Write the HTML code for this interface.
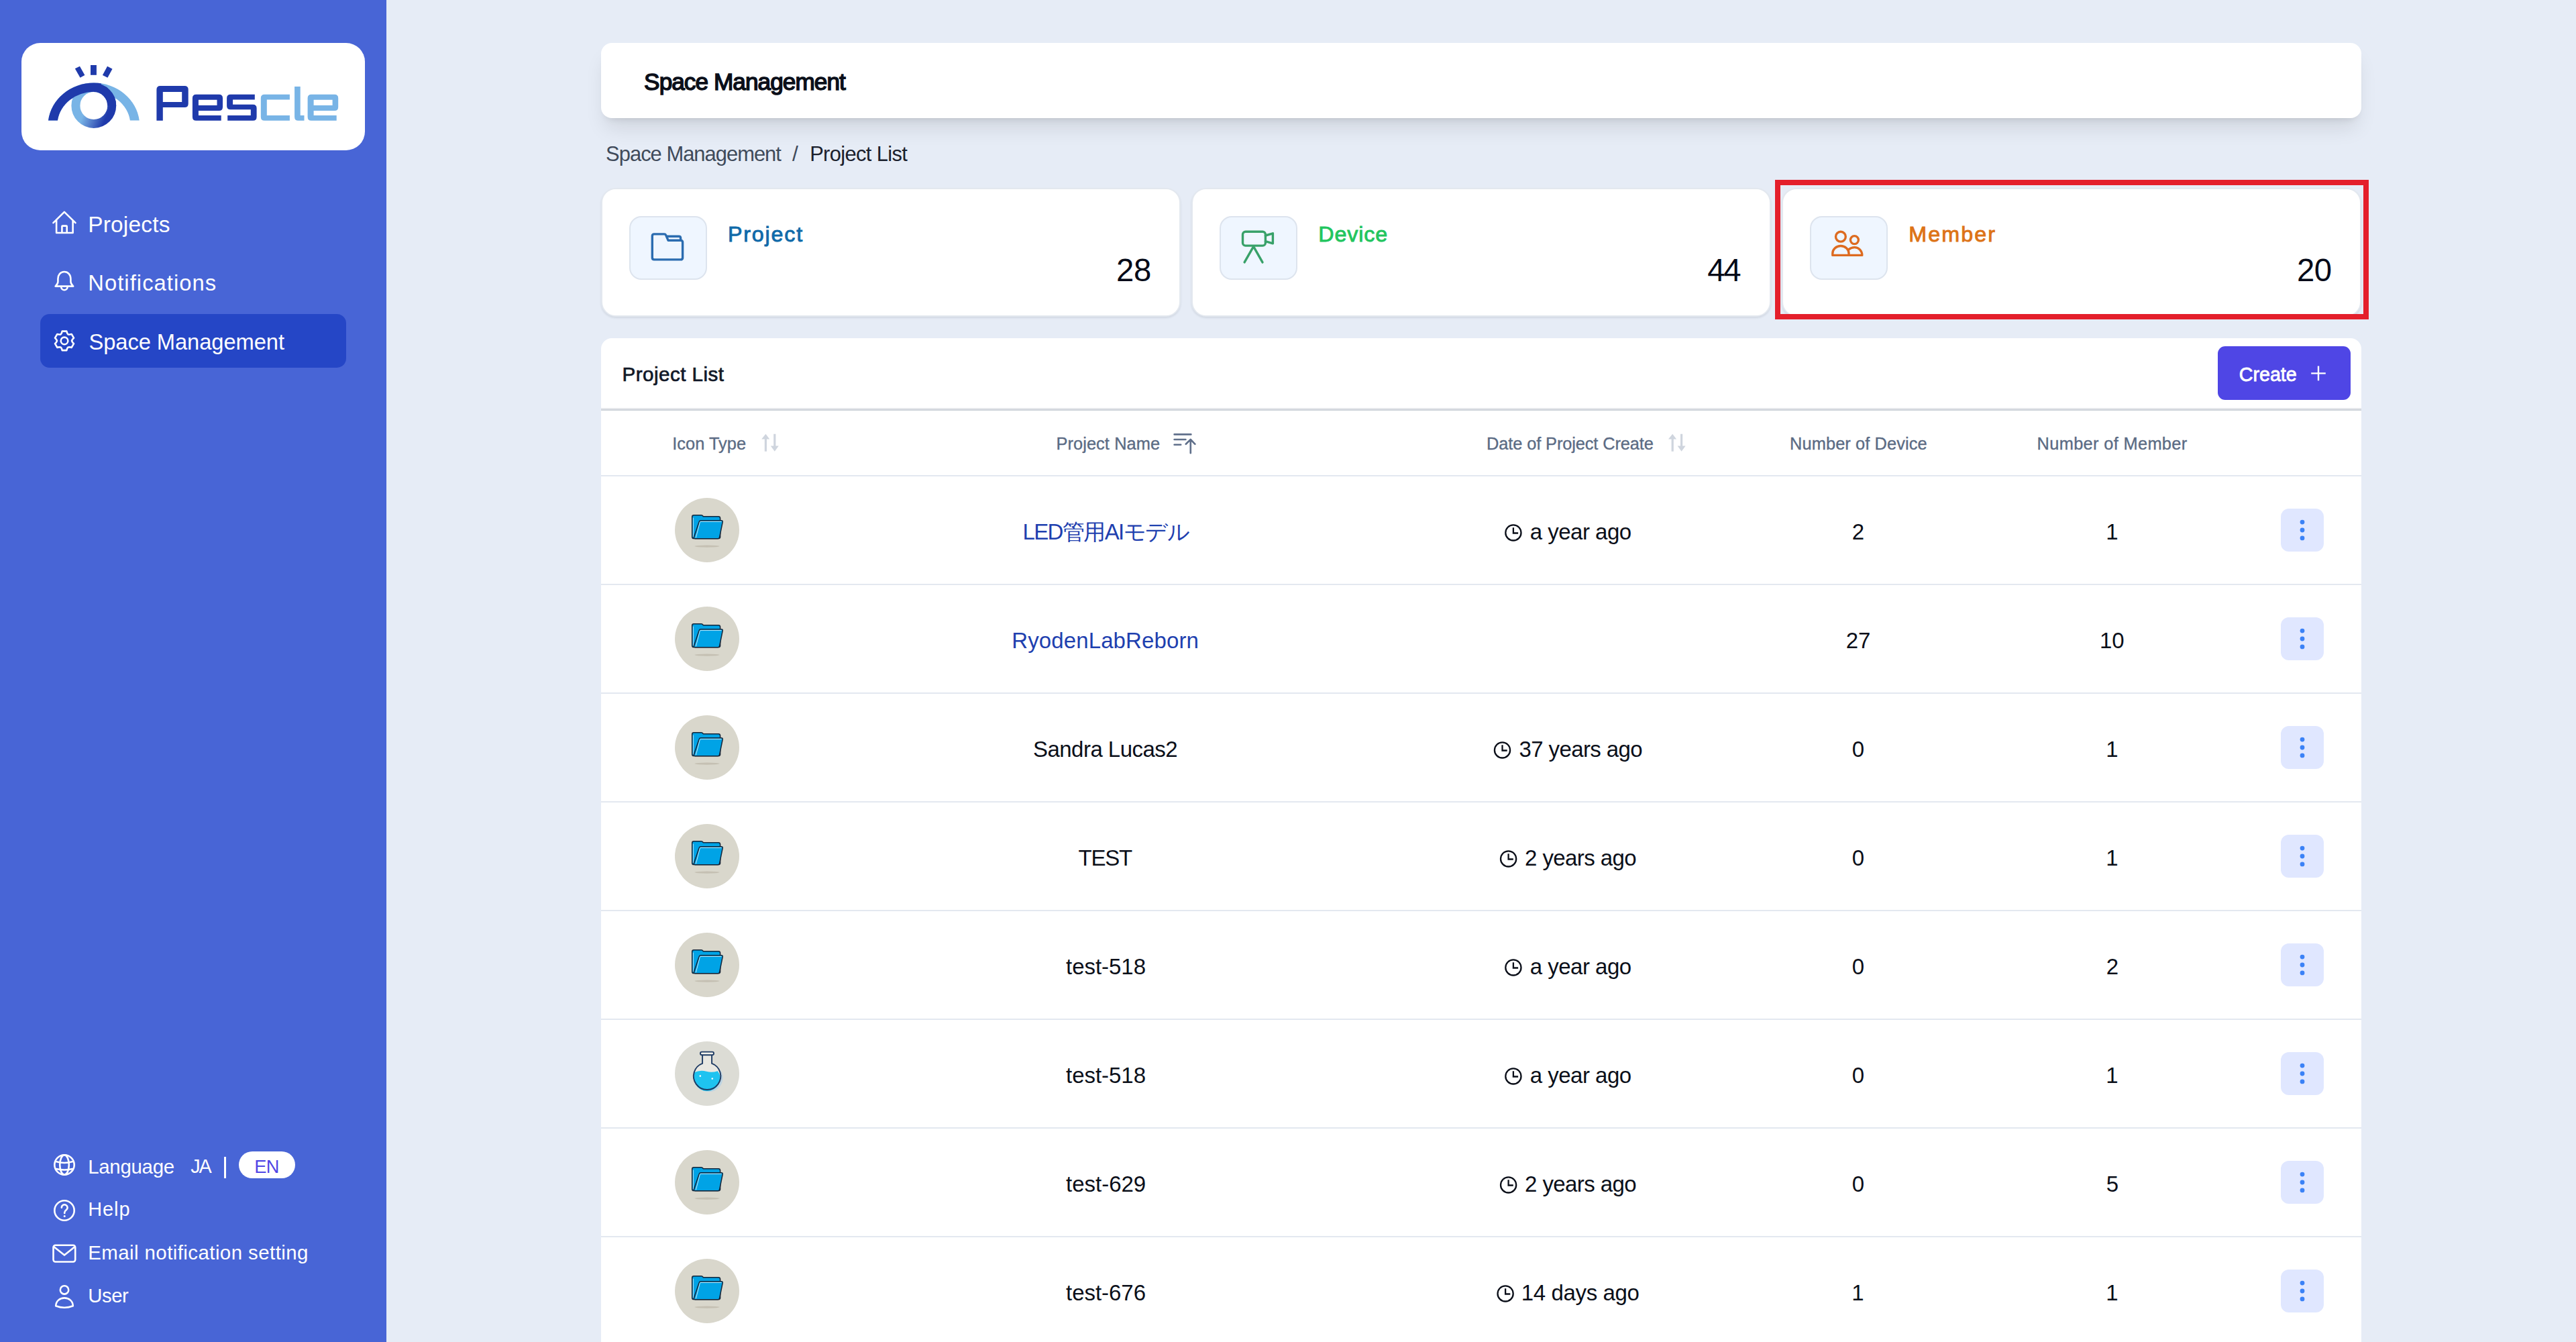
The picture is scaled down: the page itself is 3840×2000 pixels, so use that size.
<!DOCTYPE html>
<html><head><meta charset="utf-8"><style>
html,body{margin:0;padding:0}
body{width:3840px;height:2000px;overflow:hidden;position:relative;background:#e6ecf6;font-family:'Liberation Sans',sans-serif;}
</style></head><body>
<div style="position:absolute;left:0.00px;top:0.00px;width:576.00px;height:2000.00px;background:#4865d6"></div>
<div style="position:absolute;left:32.00px;top:64.00px;width:512.00px;height:160.00px;background:#fff;border-radius:28px"></div>
<div style="position:absolute;left:60.00px;top:468.00px;width:456.00px;height:80.00px;background:#2546c6;border-radius:14px"></div>
<div style="position:absolute;left:131.23px;top:317.61px;font-size:33.41px;line-height:33.41px;letter-spacing:0.217px;color:#ffffff;white-space:nowrap">Projects</div>
<div style="position:absolute;left:131.28px;top:405.51px;font-size:32.71px;line-height:32.71px;letter-spacing:1.063px;color:#ffffff;white-space:nowrap">Notifications</div>
<div style="position:absolute;left:132.43px;top:494.01px;font-size:32.71px;line-height:32.71px;letter-spacing:-0.074px;color:#ffffff;white-space:nowrap">Space Management</div>
<div style="position:absolute;left:131.15px;top:1723.59px;font-size:29.42px;line-height:29.42px;letter-spacing:-0.269px;color:#ffffff;white-space:nowrap">Language</div>
<div style="position:absolute;left:284.17px;top:1724.13px;font-size:28.78px;line-height:28.78px;letter-spacing:-2.096px;color:#ffffff;white-space:nowrap">JA</div>
<div style="position:absolute;left:333.90px;top:1724.00px;width:3.00px;height:32.00px;background:#fff"></div>
<div style="position:absolute;left:355.80px;top:1716.00px;width:84.40px;height:40.00px;background:#fff;border-radius:20px"></div>
<div style="position:absolute;left:379.13px;top:1725.49px;font-size:27.18px;line-height:27.18px;letter-spacing:-0.396px;color:#4f46e5;white-space:nowrap">EN</div>
<div style="position:absolute;left:131.19px;top:1787.94px;font-size:28.88px;line-height:28.88px;letter-spacing:1.003px;color:#ffffff;white-space:nowrap">Help</div>
<div style="position:absolute;left:131.15px;top:1851.79px;font-size:29.42px;line-height:29.42px;letter-spacing:0.447px;color:#ffffff;white-space:nowrap">Email notification setting</div>
<div style="position:absolute;left:131.30px;top:1915.80px;font-size:29.28px;line-height:29.28px;letter-spacing:-0.434px;color:#ffffff;white-space:nowrap">User</div>
<div style="position:absolute;left:896.00px;top:64.00px;width:2624.00px;height:112.00px;background:#fff;border-radius:16px;box-shadow:0 20px 30px -6px rgba(0,0,0,0.10),0 8px 12px -8px rgba(0,0,0,0.12)"></div>
<div style="position:absolute;left:960.12px;top:104.42px;font-size:35.17px;line-height:35.17px;letter-spacing:-0.931px;color:#0b0f19;-webkit-text-stroke:1.5px #0b0f19;white-space:nowrap">Space Management</div>
<div style="position:absolute;left:903.11px;top:214.56px;font-size:30.88px;line-height:30.88px;letter-spacing:-0.973px;color:#3f4a5a;white-space:nowrap">Space Management</div>
<div style="position:absolute;left:1181.00px;top:213.75px;font-size:31.83px;line-height:31.83px;letter-spacing:0.000px;color:#3f4a5a;white-space:nowrap">/</div>
<div style="position:absolute;left:1207.13px;top:214.56px;font-size:30.88px;line-height:30.88px;letter-spacing:-0.633px;color:#1a202c;white-space:nowrap">Project List</div>
<div style="position:absolute;left:896.00px;top:280.00px;width:864.00px;height:192.00px;background:#fff;border-radius:22px;border:2px solid #e3e8ef;box-sizing:border-box;box-shadow:0 2px 3px rgba(30,40,60,0.10)"></div>
<div style="position:absolute;left:938.00px;top:322.00px;width:116.00px;height:95.00px;background:#eff6ff;border:2px solid #dde4ee;border-radius:18px;box-sizing:border-box"></div>
<div style="position:absolute;left:1776.00px;top:280.00px;width:864.00px;height:192.00px;background:#fff;border-radius:22px;border:2px solid #e3e8ef;box-sizing:border-box;box-shadow:0 2px 3px rgba(30,40,60,0.10)"></div>
<div style="position:absolute;left:1818.00px;top:322.00px;width:116.00px;height:95.00px;background:#eff6ff;border:2px solid #dde4ee;border-radius:18px;box-sizing:border-box"></div>
<div style="position:absolute;left:2656.00px;top:280.00px;width:864.00px;height:192.00px;background:#fff;border-radius:22px;border:2px solid #e3e8ef;box-sizing:border-box;box-shadow:0 2px 3px rgba(30,40,60,0.10)"></div>
<div style="position:absolute;left:2698.00px;top:322.00px;width:116.00px;height:95.00px;background:#eff6ff;border:2px solid #dde4ee;border-radius:18px;box-sizing:border-box"></div>
<div style="position:absolute;left:1084.90px;top:332.50px;font-size:32.24px;line-height:32.24px;letter-spacing:1.832px;color:#0f6aa9;-webkit-text-stroke:0.9px #0f6aa9;white-space:nowrap">Project</div>
<div style="position:absolute;left:1663.93px;top:379.34px;font-size:47.31px;line-height:47.31px;letter-spacing:-0.257px;color:#050a18;white-space:nowrap">28</div>
<div style="position:absolute;left:1965.30px;top:332.50px;font-size:32.24px;line-height:32.24px;letter-spacing:0.879px;color:#22c55e;-webkit-text-stroke:0.9px #22c55e;white-space:nowrap">Device</div>
<div style="position:absolute;left:2545.35px;top:379.34px;font-size:47.31px;line-height:47.31px;letter-spacing:-2.386px;color:#050a18;white-space:nowrap">44</div>
<div style="position:absolute;left:2845.30px;top:332.50px;font-size:32.24px;line-height:32.24px;letter-spacing:2.072px;color:#dd7316;-webkit-text-stroke:0.9px #dd7316;white-space:nowrap">Member</div>
<div style="position:absolute;left:3423.93px;top:379.34px;font-size:47.31px;line-height:47.31px;letter-spacing:-0.494px;color:#050a18;white-space:nowrap">20</div>
<div style="position:absolute;left:2645.50px;top:267.50px;width:885.70px;height:208.00px;border:8px solid #e41f2b;box-sizing:border-box"></div>
<div style="position:absolute;left:896.00px;top:504.00px;width:2624.00px;height:1600.00px;background:#fff;border-radius:16px"></div>
<div style="position:absolute;left:896.00px;top:608.00px;width:2624.00px;height:2.00px;background:#e5e7eb"></div>
<div style="position:absolute;left:896.00px;top:610.00px;width:2624.00px;height:2.00px;background:#cdd2d9"></div>
<div style="position:absolute;left:927.43px;top:543.03px;font-size:29.61px;line-height:29.61px;letter-spacing:0.474px;color:#111827;-webkit-text-stroke:0.7px #111827;white-space:nowrap">Project List</div>
<div style="position:absolute;left:3306.00px;top:516.00px;width:198.00px;height:80.00px;background:#4f46e5;border-radius:11px"></div>
<div style="position:absolute;left:3337.70px;top:543.61px;font-size:28.69px;line-height:28.69px;letter-spacing:-0.011px;color:#fff;-webkit-text-stroke:0.8px #fff;white-space:nowrap">Create</div>
<div style="position:absolute;left:1002.24px;top:648.51px;font-size:25.38px;line-height:25.38px;letter-spacing:0.030px;color:#5b6b84;-webkit-text-stroke:0.35px #5b6b84;white-space:nowrap">Icon Type</div>
<div style="position:absolute;left:1574.40px;top:648.51px;font-size:25.38px;line-height:25.38px;letter-spacing:0.093px;color:#5b6b84;-webkit-text-stroke:0.35px #5b6b84;white-space:nowrap">Project Name</div>
<div style="position:absolute;left:2216.10px;top:648.51px;font-size:25.38px;line-height:25.38px;letter-spacing:-0.111px;color:#5b6b84;-webkit-text-stroke:0.35px #5b6b84;white-space:nowrap">Date of Project Create</div>
<div style="position:absolute;left:2668.10px;top:648.51px;font-size:25.38px;line-height:25.38px;letter-spacing:0.091px;color:#5b6b84;-webkit-text-stroke:0.35px #5b6b84;white-space:nowrap">Number of Device</div>
<div style="position:absolute;left:3036.60px;top:648.51px;font-size:25.38px;line-height:25.38px;letter-spacing:0.335px;color:#5b6b84;-webkit-text-stroke:0.35px #5b6b84;white-space:nowrap">Number of Member</div>
<div style="position:absolute;left:896.00px;top:708.00px;width:2624.00px;height:2.00px;background:#e3e8f0"></div>
<div style="position:absolute;left:896.00px;top:870.00px;width:2624.00px;height:2.00px;background:#e3e8f0"></div>
<div style="position:absolute;left:896.00px;top:1032.00px;width:2624.00px;height:2.00px;background:#e3e8f0"></div>
<div style="position:absolute;left:896.00px;top:1194.00px;width:2624.00px;height:2.00px;background:#e3e8f0"></div>
<div style="position:absolute;left:896.00px;top:1356.00px;width:2624.00px;height:2.00px;background:#e3e8f0"></div>
<div style="position:absolute;left:896.00px;top:1518.00px;width:2624.00px;height:2.00px;background:#e3e8f0"></div>
<div style="position:absolute;left:896.00px;top:1680.00px;width:2624.00px;height:2.00px;background:#e3e8f0"></div>
<div style="position:absolute;left:896.00px;top:1842.00px;width:2624.00px;height:2.00px;background:#e3e8f0"></div>
<div style="position:absolute;left:1006.00px;top:742.00px;width:96.00px;height:96.00px;background:#d9d7cc;border-radius:50%"></div>
<div style="position:absolute;left:3400.00px;top:758.00px;width:64.00px;height:64.00px;background:#e0e7ff;border-radius:12px"></div>
<div style="position:absolute;left:1524.38px;top:776.46px;font-size:33.00px;line-height:33.00px;letter-spacing:-1.580px;color:#1e40af;white-space:nowrap">LED管用AIモデル</div>
<div style="position:absolute;left:2280.73px;top:776.46px;font-size:33.00px;line-height:33.00px;letter-spacing:-0.498px;color:#0b0f19;white-space:nowrap">a year ago</div>
<div style="position:absolute;left:2760.84px;top:776.46px;font-size:33.00px;line-height:33.00px;letter-spacing:0.000px;color:#0b0f19;white-space:nowrap">2</div>
<div style="position:absolute;left:3139.35px;top:776.46px;font-size:33.00px;line-height:33.00px;letter-spacing:0.000px;color:#0b0f19;white-space:nowrap">1</div>
<div style="position:absolute;left:1006.00px;top:904.00px;width:96.00px;height:96.00px;background:#d9d7cc;border-radius:50%"></div>
<div style="position:absolute;left:3400.00px;top:920.00px;width:64.00px;height:64.00px;background:#e0e7ff;border-radius:12px"></div>
<div style="position:absolute;left:1508.26px;top:938.46px;font-size:33.00px;line-height:33.00px;letter-spacing:0.113px;color:#1e40af;white-space:nowrap">RyodenLabReborn</div>
<div style="position:absolute;left:2751.68px;top:938.46px;font-size:33.00px;line-height:33.00px;letter-spacing:0.000px;color:#0b0f19;white-space:nowrap">27</div>
<div style="position:absolute;left:3130.03px;top:938.46px;font-size:33.00px;line-height:33.00px;letter-spacing:0.000px;color:#0b0f19;white-space:nowrap">10</div>
<div style="position:absolute;left:1006.00px;top:1066.00px;width:96.00px;height:96.00px;background:#d9d7cc;border-radius:50%"></div>
<div style="position:absolute;left:3400.00px;top:1082.00px;width:64.00px;height:64.00px;background:#e0e7ff;border-radius:12px"></div>
<div style="position:absolute;left:1539.92px;top:1100.46px;font-size:33.00px;line-height:33.00px;letter-spacing:-0.516px;color:#0b0f19;white-space:nowrap">Sandra Lucas2</div>
<div style="position:absolute;left:2264.49px;top:1100.46px;font-size:33.00px;line-height:33.00px;letter-spacing:-0.606px;color:#0b0f19;white-space:nowrap">37 years ago</div>
<div style="position:absolute;left:2760.76px;top:1100.46px;font-size:33.00px;line-height:33.00px;letter-spacing:0.000px;color:#0b0f19;white-space:nowrap">0</div>
<div style="position:absolute;left:3139.35px;top:1100.46px;font-size:33.00px;line-height:33.00px;letter-spacing:0.000px;color:#0b0f19;white-space:nowrap">1</div>
<div style="position:absolute;left:1006.00px;top:1228.00px;width:96.00px;height:96.00px;background:#d9d7cc;border-radius:50%"></div>
<div style="position:absolute;left:3400.00px;top:1244.00px;width:64.00px;height:64.00px;background:#e0e7ff;border-radius:12px"></div>
<div style="position:absolute;left:1607.49px;top:1262.46px;font-size:33.00px;line-height:33.00px;letter-spacing:-1.200px;color:#0b0f19;white-space:nowrap">TEST</div>
<div style="position:absolute;left:2273.10px;top:1262.46px;font-size:33.00px;line-height:33.00px;letter-spacing:-0.605px;color:#0b0f19;white-space:nowrap">2 years ago</div>
<div style="position:absolute;left:2760.76px;top:1262.46px;font-size:33.00px;line-height:33.00px;letter-spacing:0.000px;color:#0b0f19;white-space:nowrap">0</div>
<div style="position:absolute;left:3139.35px;top:1262.46px;font-size:33.00px;line-height:33.00px;letter-spacing:0.000px;color:#0b0f19;white-space:nowrap">1</div>
<div style="position:absolute;left:1006.00px;top:1390.00px;width:96.00px;height:96.00px;background:#d9d7cc;border-radius:50%"></div>
<div style="position:absolute;left:3400.00px;top:1406.00px;width:64.00px;height:64.00px;background:#e0e7ff;border-radius:12px"></div>
<div style="position:absolute;left:1589.11px;top:1424.46px;font-size:33.00px;line-height:33.00px;letter-spacing:-0.045px;color:#0b0f19;white-space:nowrap">test-518</div>
<div style="position:absolute;left:2280.73px;top:1424.46px;font-size:33.00px;line-height:33.00px;letter-spacing:-0.498px;color:#0b0f19;white-space:nowrap">a year ago</div>
<div style="position:absolute;left:2760.76px;top:1424.46px;font-size:33.00px;line-height:33.00px;letter-spacing:0.000px;color:#0b0f19;white-space:nowrap">0</div>
<div style="position:absolute;left:3139.84px;top:1424.46px;font-size:33.00px;line-height:33.00px;letter-spacing:0.000px;color:#0b0f19;white-space:nowrap">2</div>
<div style="position:absolute;left:1006.00px;top:1552.00px;width:96.00px;height:96.00px;background:#dcdcd5;border-radius:50%"></div>
<div style="position:absolute;left:3400.00px;top:1568.00px;width:64.00px;height:64.00px;background:#e0e7ff;border-radius:12px"></div>
<div style="position:absolute;left:1589.11px;top:1586.46px;font-size:33.00px;line-height:33.00px;letter-spacing:-0.045px;color:#0b0f19;white-space:nowrap">test-518</div>
<div style="position:absolute;left:2280.73px;top:1586.46px;font-size:33.00px;line-height:33.00px;letter-spacing:-0.498px;color:#0b0f19;white-space:nowrap">a year ago</div>
<div style="position:absolute;left:2760.76px;top:1586.46px;font-size:33.00px;line-height:33.00px;letter-spacing:0.000px;color:#0b0f19;white-space:nowrap">0</div>
<div style="position:absolute;left:3139.35px;top:1586.46px;font-size:33.00px;line-height:33.00px;letter-spacing:0.000px;color:#0b0f19;white-space:nowrap">1</div>
<div style="position:absolute;left:1006.00px;top:1714.00px;width:96.00px;height:96.00px;background:#d9d7cc;border-radius:50%"></div>
<div style="position:absolute;left:3400.00px;top:1730.00px;width:64.00px;height:64.00px;background:#e0e7ff;border-radius:12px"></div>
<div style="position:absolute;left:1589.11px;top:1748.46px;font-size:33.00px;line-height:33.00px;letter-spacing:-0.021px;color:#0b0f19;white-space:nowrap">test-629</div>
<div style="position:absolute;left:2273.10px;top:1748.46px;font-size:33.00px;line-height:33.00px;letter-spacing:-0.605px;color:#0b0f19;white-space:nowrap">2 years ago</div>
<div style="position:absolute;left:2760.76px;top:1748.46px;font-size:33.00px;line-height:33.00px;letter-spacing:0.000px;color:#0b0f19;white-space:nowrap">0</div>
<div style="position:absolute;left:3139.84px;top:1748.46px;font-size:33.00px;line-height:33.00px;letter-spacing:0.000px;color:#0b0f19;white-space:nowrap">5</div>
<div style="position:absolute;left:1006.00px;top:1876.00px;width:96.00px;height:96.00px;background:#d9d7cc;border-radius:50%"></div>
<div style="position:absolute;left:3400.00px;top:1892.00px;width:64.00px;height:64.00px;background:#e0e7ff;border-radius:12px"></div>
<div style="position:absolute;left:1589.11px;top:1910.46px;font-size:33.00px;line-height:33.00px;letter-spacing:-0.045px;color:#0b0f19;white-space:nowrap">test-676</div>
<div style="position:absolute;left:2267.78px;top:1910.46px;font-size:33.00px;line-height:33.00px;letter-spacing:-0.365px;color:#0b0f19;white-space:nowrap">14 days ago</div>
<div style="position:absolute;left:2760.35px;top:1910.46px;font-size:33.00px;line-height:33.00px;letter-spacing:0.000px;color:#0b0f19;white-space:nowrap">1</div>
<div style="position:absolute;left:3139.35px;top:1910.46px;font-size:33.00px;line-height:33.00px;letter-spacing:0.000px;color:#0b0f19;white-space:nowrap">1</div>
<svg width="3840" height="2000" style="position:absolute;left:0;top:0"><circle cx="2255.90" cy="793.90" r="11.6" fill="none" stroke="#0b0f19" stroke-width="2.3"/>
<path d="M2255.90,786.30 V794.50 H2263.10" fill="none" stroke="#0b0f19" stroke-width="2.3"/>
<circle cx="3432" cy="778.10" r="3.4" fill="#3b82f6"/>
<circle cx="3432" cy="790.00" r="3.4" fill="#3b82f6"/>
<circle cx="3432" cy="801.90" r="3.4" fill="#3b82f6"/>
<g transform="translate(1054,790.0)"><ellipse cx="0" cy="24.1" rx="18.6" ry="1.6" fill="#bcb6a8" opacity="0.7"/><path d="M-22.3,-19.8 Q-22.3,-22.3 -19.8,-22.3 H-8.5 Q-7,-22.3 -6.2,-21 L-5.6,-20.2 H17 Q19.6,-20.2 19.6,-17.6 V10 Q19.6,12.6 17,12.6 H-19.8 Q-22.3,12.6 -22.3,10 Z" fill="#00a3e6" stroke="#15263a" stroke-width="1.5"/><path d="M-20.6,-18.5 V10.5" stroke="#ffffff" stroke-width="0.9" opacity="0.8"/><path d="M-11.8,-12.4 Q-11.2,-14.3 -9.2,-14.3 H21.3 Q23.6,-14.3 23.2,-12 L18.6,10.6 Q18.1,12.7 16,12.7 H-17.6 Q-20.1,12.7 -19.6,10.4 Z" fill="#00a3e6" stroke="#15263a" stroke-width="1.5"/><path d="M-10.4,-12.6 H21.5 M-10.6,-12 L-16.6,11.3" stroke="#ffffff" stroke-width="0.9" opacity="0.85" fill="none"/></g>
<circle cx="3432" cy="940.10" r="3.4" fill="#3b82f6"/>
<circle cx="3432" cy="952.00" r="3.4" fill="#3b82f6"/>
<circle cx="3432" cy="963.90" r="3.4" fill="#3b82f6"/>
<g transform="translate(1054,952.0)"><ellipse cx="0" cy="24.1" rx="18.6" ry="1.6" fill="#bcb6a8" opacity="0.7"/><path d="M-22.3,-19.8 Q-22.3,-22.3 -19.8,-22.3 H-8.5 Q-7,-22.3 -6.2,-21 L-5.6,-20.2 H17 Q19.6,-20.2 19.6,-17.6 V10 Q19.6,12.6 17,12.6 H-19.8 Q-22.3,12.6 -22.3,10 Z" fill="#00a3e6" stroke="#15263a" stroke-width="1.5"/><path d="M-20.6,-18.5 V10.5" stroke="#ffffff" stroke-width="0.9" opacity="0.8"/><path d="M-11.8,-12.4 Q-11.2,-14.3 -9.2,-14.3 H21.3 Q23.6,-14.3 23.2,-12 L18.6,10.6 Q18.1,12.7 16,12.7 H-17.6 Q-20.1,12.7 -19.6,10.4 Z" fill="#00a3e6" stroke="#15263a" stroke-width="1.5"/><path d="M-10.4,-12.6 H21.5 M-10.6,-12 L-16.6,11.3" stroke="#ffffff" stroke-width="0.9" opacity="0.85" fill="none"/></g>
<circle cx="2239.50" cy="1117.90" r="11.6" fill="none" stroke="#0b0f19" stroke-width="2.3"/>
<path d="M2239.50,1110.30 V1118.50 H2246.70" fill="none" stroke="#0b0f19" stroke-width="2.3"/>
<circle cx="3432" cy="1102.10" r="3.4" fill="#3b82f6"/>
<circle cx="3432" cy="1114.00" r="3.4" fill="#3b82f6"/>
<circle cx="3432" cy="1125.90" r="3.4" fill="#3b82f6"/>
<g transform="translate(1054,1114.0)"><ellipse cx="0" cy="24.1" rx="18.6" ry="1.6" fill="#bcb6a8" opacity="0.7"/><path d="M-22.3,-19.8 Q-22.3,-22.3 -19.8,-22.3 H-8.5 Q-7,-22.3 -6.2,-21 L-5.6,-20.2 H17 Q19.6,-20.2 19.6,-17.6 V10 Q19.6,12.6 17,12.6 H-19.8 Q-22.3,12.6 -22.3,10 Z" fill="#00a3e6" stroke="#15263a" stroke-width="1.5"/><path d="M-20.6,-18.5 V10.5" stroke="#ffffff" stroke-width="0.9" opacity="0.8"/><path d="M-11.8,-12.4 Q-11.2,-14.3 -9.2,-14.3 H21.3 Q23.6,-14.3 23.2,-12 L18.6,10.6 Q18.1,12.7 16,12.7 H-17.6 Q-20.1,12.7 -19.6,10.4 Z" fill="#00a3e6" stroke="#15263a" stroke-width="1.5"/><path d="M-10.4,-12.6 H21.5 M-10.6,-12 L-16.6,11.3" stroke="#ffffff" stroke-width="0.9" opacity="0.85" fill="none"/></g>
<circle cx="2248.60" cy="1279.90" r="11.6" fill="none" stroke="#0b0f19" stroke-width="2.3"/>
<path d="M2248.60,1272.30 V1280.50 H2255.80" fill="none" stroke="#0b0f19" stroke-width="2.3"/>
<circle cx="3432" cy="1264.10" r="3.4" fill="#3b82f6"/>
<circle cx="3432" cy="1276.00" r="3.4" fill="#3b82f6"/>
<circle cx="3432" cy="1287.90" r="3.4" fill="#3b82f6"/>
<g transform="translate(1054,1276.0)"><ellipse cx="0" cy="24.1" rx="18.6" ry="1.6" fill="#bcb6a8" opacity="0.7"/><path d="M-22.3,-19.8 Q-22.3,-22.3 -19.8,-22.3 H-8.5 Q-7,-22.3 -6.2,-21 L-5.6,-20.2 H17 Q19.6,-20.2 19.6,-17.6 V10 Q19.6,12.6 17,12.6 H-19.8 Q-22.3,12.6 -22.3,10 Z" fill="#00a3e6" stroke="#15263a" stroke-width="1.5"/><path d="M-20.6,-18.5 V10.5" stroke="#ffffff" stroke-width="0.9" opacity="0.8"/><path d="M-11.8,-12.4 Q-11.2,-14.3 -9.2,-14.3 H21.3 Q23.6,-14.3 23.2,-12 L18.6,10.6 Q18.1,12.7 16,12.7 H-17.6 Q-20.1,12.7 -19.6,10.4 Z" fill="#00a3e6" stroke="#15263a" stroke-width="1.5"/><path d="M-10.4,-12.6 H21.5 M-10.6,-12 L-16.6,11.3" stroke="#ffffff" stroke-width="0.9" opacity="0.85" fill="none"/></g>
<circle cx="2255.90" cy="1441.90" r="11.6" fill="none" stroke="#0b0f19" stroke-width="2.3"/>
<path d="M2255.90,1434.30 V1442.50 H2263.10" fill="none" stroke="#0b0f19" stroke-width="2.3"/>
<circle cx="3432" cy="1426.10" r="3.4" fill="#3b82f6"/>
<circle cx="3432" cy="1438.00" r="3.4" fill="#3b82f6"/>
<circle cx="3432" cy="1449.90" r="3.4" fill="#3b82f6"/>
<g transform="translate(1054,1438.0)"><ellipse cx="0" cy="24.1" rx="18.6" ry="1.6" fill="#bcb6a8" opacity="0.7"/><path d="M-22.3,-19.8 Q-22.3,-22.3 -19.8,-22.3 H-8.5 Q-7,-22.3 -6.2,-21 L-5.6,-20.2 H17 Q19.6,-20.2 19.6,-17.6 V10 Q19.6,12.6 17,12.6 H-19.8 Q-22.3,12.6 -22.3,10 Z" fill="#00a3e6" stroke="#15263a" stroke-width="1.5"/><path d="M-20.6,-18.5 V10.5" stroke="#ffffff" stroke-width="0.9" opacity="0.8"/><path d="M-11.8,-12.4 Q-11.2,-14.3 -9.2,-14.3 H21.3 Q23.6,-14.3 23.2,-12 L18.6,10.6 Q18.1,12.7 16,12.7 H-17.6 Q-20.1,12.7 -19.6,10.4 Z" fill="#00a3e6" stroke="#15263a" stroke-width="1.5"/><path d="M-10.4,-12.6 H21.5 M-10.6,-12 L-16.6,11.3" stroke="#ffffff" stroke-width="0.9" opacity="0.85" fill="none"/></g>
<circle cx="2255.90" cy="1603.90" r="11.6" fill="none" stroke="#0b0f19" stroke-width="2.3"/>
<path d="M2255.90,1596.30 V1604.50 H2263.10" fill="none" stroke="#0b0f19" stroke-width="2.3"/>
<circle cx="3432" cy="1588.10" r="3.4" fill="#3b82f6"/>
<circle cx="3432" cy="1600.00" r="3.4" fill="#3b82f6"/>
<circle cx="3432" cy="1611.90" r="3.4" fill="#3b82f6"/>
<g transform="translate(1054,1600.0)"><circle cx="3" cy="6.5" r="20.5" fill="#a9cdea" opacity="0.6"/><path d="M-6.9,-28 V-15.2 A20.2,20.2 0 1 0 7.1,-15.2 V-28 Z" fill="#e9e8e2"/><path d="M-19.2,-1.8 Q-10,-6 -1,-3.2 Q7,-0.8 15.8,-3.8 Q20.5,3 19.6,8 A19.2,19.2 0 0 1 -19.4,5 Q-20,1 -19.2,-1.8 Z" fill="#1ec3f0"/><path d="M-6.9,-28 V-15.2 A20.2,20.2 0 1 0 7.1,-15.2 V-28" fill="none" stroke="#1d3a63" stroke-width="1.9"/><rect x="-10" y="-32.4" width="20" height="4.6" rx="2.2" fill="#f3f2ec" stroke="#1d3a63" stroke-width="1.9"/><circle cx="-10.2" cy="3.6" r="1.3" fill="#fff"/><circle cx="7.8" cy="7.5" r="1.3" fill="#fff"/></g>
<circle cx="2248.60" cy="1765.90" r="11.6" fill="none" stroke="#0b0f19" stroke-width="2.3"/>
<path d="M2248.60,1758.30 V1766.50 H2255.80" fill="none" stroke="#0b0f19" stroke-width="2.3"/>
<circle cx="3432" cy="1750.10" r="3.4" fill="#3b82f6"/>
<circle cx="3432" cy="1762.00" r="3.4" fill="#3b82f6"/>
<circle cx="3432" cy="1773.90" r="3.4" fill="#3b82f6"/>
<g transform="translate(1054,1762.0)"><ellipse cx="0" cy="24.1" rx="18.6" ry="1.6" fill="#bcb6a8" opacity="0.7"/><path d="M-22.3,-19.8 Q-22.3,-22.3 -19.8,-22.3 H-8.5 Q-7,-22.3 -6.2,-21 L-5.6,-20.2 H17 Q19.6,-20.2 19.6,-17.6 V10 Q19.6,12.6 17,12.6 H-19.8 Q-22.3,12.6 -22.3,10 Z" fill="#00a3e6" stroke="#15263a" stroke-width="1.5"/><path d="M-20.6,-18.5 V10.5" stroke="#ffffff" stroke-width="0.9" opacity="0.8"/><path d="M-11.8,-12.4 Q-11.2,-14.3 -9.2,-14.3 H21.3 Q23.6,-14.3 23.2,-12 L18.6,10.6 Q18.1,12.7 16,12.7 H-17.6 Q-20.1,12.7 -19.6,10.4 Z" fill="#00a3e6" stroke="#15263a" stroke-width="1.5"/><path d="M-10.4,-12.6 H21.5 M-10.6,-12 L-16.6,11.3" stroke="#ffffff" stroke-width="0.9" opacity="0.85" fill="none"/></g>
<circle cx="2244.10" cy="1927.90" r="11.6" fill="none" stroke="#0b0f19" stroke-width="2.3"/>
<path d="M2244.10,1920.30 V1928.50 H2251.30" fill="none" stroke="#0b0f19" stroke-width="2.3"/>
<circle cx="3432" cy="1912.10" r="3.4" fill="#3b82f6"/>
<circle cx="3432" cy="1924.00" r="3.4" fill="#3b82f6"/>
<circle cx="3432" cy="1935.90" r="3.4" fill="#3b82f6"/>
<g transform="translate(1054,1924.0)"><ellipse cx="0" cy="24.1" rx="18.6" ry="1.6" fill="#bcb6a8" opacity="0.7"/><path d="M-22.3,-19.8 Q-22.3,-22.3 -19.8,-22.3 H-8.5 Q-7,-22.3 -6.2,-21 L-5.6,-20.2 H17 Q19.6,-20.2 19.6,-17.6 V10 Q19.6,12.6 17,12.6 H-19.8 Q-22.3,12.6 -22.3,10 Z" fill="#00a3e6" stroke="#15263a" stroke-width="1.5"/><path d="M-20.6,-18.5 V10.5" stroke="#ffffff" stroke-width="0.9" opacity="0.8"/><path d="M-11.8,-12.4 Q-11.2,-14.3 -9.2,-14.3 H21.3 Q23.6,-14.3 23.2,-12 L18.6,10.6 Q18.1,12.7 16,12.7 H-17.6 Q-20.1,12.7 -19.6,10.4 Z" fill="#00a3e6" stroke="#15263a" stroke-width="1.5"/><path d="M-10.4,-12.6 H21.5 M-10.6,-12 L-16.6,11.3" stroke="#ffffff" stroke-width="0.9" opacity="0.85" fill="none"/></g>
<path d="M79.4,332.2 L95.9,315.8 L112.5,332.2 M84.1,328.3 V347 H108.6 V328.3 M92.4,347 V337.4 Q92.4,336.6 93.2,336.6 H98.9 Q99.7,336.6 99.7,337.4 V347" fill="none" stroke="#ffffff" stroke-width="2.6" stroke-linecap="round" stroke-linejoin="round"/>
<path d="M95.8,405 C90,405 86.4,409.6 86.4,415.6 V419.8 C86.4,423 84.2,425 82.6,426.6 H109.2 C107.6,425 105.4,423 105.4,419.8 V415.6 C105.4,409.6 101.6,405 95.8,405 Z M91.2,427.6 A4.7,4.7 0 0 0 100.6,427.6" fill="none" stroke="#ffffff" stroke-width="2.6" stroke-linecap="round" stroke-linejoin="round"/>
<path d="M90.50,498.37 L91.83,496.44 L92.72,493.67 L99.28,493.67 L100.17,496.44 L101.50,498.37 L103.84,498.55 L106.68,497.94 L109.96,503.63 L108.01,505.78 L107.00,507.90 L108.01,510.02 L109.96,512.17 L106.68,517.86 L103.84,517.25 L101.50,517.43 L100.17,519.36 L99.28,522.13 L92.72,522.13 L91.83,519.36 L90.50,517.43 L88.16,517.25 L85.32,517.86 L82.04,512.17 L83.99,510.02 L85.00,507.90 L83.99,505.78 L82.04,503.63 L85.32,497.94 L88.16,498.55 Z" fill="none" stroke="#ffffff" stroke-width="2.6" stroke-linecap="round" stroke-linejoin="round"/>
<circle cx="96" cy="507.9" r="5.3" fill="none" stroke="#ffffff" stroke-width="2.6" stroke-linecap="round" stroke-linejoin="round"/>
<circle cx="96" cy="1736" r="14.7" fill="none" stroke="#ffffff" stroke-width="2.6" stroke-linecap="round" stroke-linejoin="round"/><ellipse cx="96" cy="1736" rx="6.8" ry="14.7" fill="none" stroke="#ffffff" stroke-width="2.6" stroke-linecap="round" stroke-linejoin="round"/><path d="M83.2,1730.9 Q96,1735 108.8,1730.9 M83.8,1742 Q96,1745 108.2,1742" fill="none" stroke="#ffffff" stroke-width="2.6" stroke-linecap="round" stroke-linejoin="round"/>
<circle cx="96" cy="1804" r="14.7" fill="none" stroke="#ffffff" stroke-width="2.6" stroke-linecap="round" stroke-linejoin="round"/><path d="M91.8,1799.8 A4.4,4.4 0 1 1 98.6,1803.4 C97,1804.4 96.2,1805.2 96.2,1807.3 V1808" fill="none" stroke="#ffffff" stroke-width="2.6" stroke-linecap="round" stroke-linejoin="round"/><circle cx="96.2" cy="1812.6" r="1.5" fill="#fff"/>
<rect x="79.5" y="1855.7" width="32.7" height="24.8" rx="3.2" fill="none" stroke="#ffffff" stroke-width="2.6" stroke-linecap="round" stroke-linejoin="round"/><path d="M80.5,1858.2 L96,1870.6 L111.3,1858.2" fill="none" stroke="#ffffff" stroke-width="2.6" stroke-linecap="round" stroke-linejoin="round"/>
<circle cx="96" cy="1922.4" r="6.2" fill="none" stroke="#ffffff" stroke-width="2.6" stroke-linecap="round" stroke-linejoin="round"/><path d="M83.2,1946.2 C83.4,1939 89,1934.4 96,1934.4 C103,1934.4 108.6,1939 108.8,1946.2 Q96,1951.2 83.2,1946.2 Z" fill="none" stroke="#ffffff" stroke-width="2.6" stroke-linecap="round" stroke-linejoin="round"/>
<path d="M972.3,384 V351.7 Q972.3,348.9 975.1,348.9 H990.3 Q991.9,348.9 992.6,350.4 L996.1,358.3 H1014.8 Q1017.6,358.3 1017.6,361.1 V384.1 Q1017.6,386.9 1014.8,386.9 H975.1 Q972.3,386.9 972.3,384.1 Z M994.3,352.2 H1012 Q1014.6,352.2 1014.6,354.8 V358" stroke="#2b6cb0" fill="none" stroke-width="3.4" stroke-linecap="round" stroke-linejoin="round"/>
<rect x="1852.5" y="345.3" width="33.9" height="20.8" rx="4.2" stroke="#38a169" fill="none" stroke-width="3.4" stroke-linecap="round" stroke-linejoin="round"/><path d="M1886.4,351 L1897.4,347.8 V362.8 L1886.4,359.7 M1855.1,390.9 L1868.6,367.4 L1882,390.9" stroke="#38a169" fill="none" stroke-width="3.4" stroke-linecap="round" stroke-linejoin="round"/>
<circle cx="2743.9" cy="352.7" r="7.4" stroke="#dd6b20" fill="none" stroke-width="3.4" stroke-linecap="round" stroke-linejoin="round"/><circle cx="2764.4" cy="357.6" r="6" stroke="#dd6b20" fill="none" stroke-width="3.4" stroke-linecap="round" stroke-linejoin="round"/><path d="M2731.8,380.4 V377.6 A12.1,11.2 0 0 1 2756,377.6 V380.4 Z M2756,371.8 Q2759.4,368.6 2764.6,368.6 C2771,368.6 2775.8,374.2 2775.8,380.4 H2756" stroke="#dd6b20" fill="none" stroke-width="3.4" stroke-linecap="round" stroke-linejoin="round"/>
<path d="M1141.40,650.5 V672.7 M1154.80,646.7 V669" stroke="#cfd5de" stroke-width="3.2"/><path d="M1135.20,654.6 L1141.40,646.7 L1147.30,654.6 Z M1148.80,664.6 L1154.80,672.7 L1160.80,664.6 Z" fill="#cfd5de"/>
<path d="M2493.20,650.5 V672.7 M2506.60,646.7 V669" stroke="#cfd5de" stroke-width="3.2"/><path d="M2487.00,654.6 L2493.20,646.7 L2499.10,654.6 Z M2500.60,664.6 L2506.60,672.7 L2512.60,664.6 Z" fill="#cfd5de"/>
<path d="M1750.6,647.4 H1775.4 M1750.6,655 H1767.4 M1750.6,662.7 H1760.2 M1774.8,675.2 V655.2 M1767.8,661.8 L1774.8,655 L1781.4,661.8" fill="none" stroke="#5f6f8a" stroke-width="2.6" stroke-linecap="round" stroke-linejoin="round"/>
<path d="M3445.2,556.4 H3466.8 M3456,545.6 V567.2" stroke="#fff" stroke-width="2.4"/>
<polygon points="111.8,102.3 118.9,98.75 126.4,112.1 119.5,115.7" fill="#1f3aab"/>
<rect x="135" y="97" width="8.9" height="14.8" fill="#1f3aab"/>
<polygon points="160,98.75 167.5,102.7 160.4,115.7 152.9,112.1" fill="#1f3aab"/>
<path d="M72,179.6 A68.3,63.25 0 0 1 207.7,179.6 L193.9,179.6 A54.5,49.5 0 0 0 85.9,179.6 Z" fill="#78b4e6"/>
<defs><linearGradient id="rg" gradientUnits="userSpaceOnUse" x1="118" y1="160" x2="162" y2="178"><stop offset="0" stop-color="#78b4e6"/><stop offset="0.2" stop-color="#78b4e6"/><stop offset="0.6" stop-color="#4a70c4"/><stop offset="0.9" stop-color="#1f3aab"/><stop offset="1" stop-color="#1f3aab"/></linearGradient><clipPath id="dkclip"><polygon points="60,60 153,60 150,150 60,200"/></clipPath></defs>
<circle cx="139.8" cy="157.5" r="26.9" fill="none" stroke="url(#rg)" stroke-width="13"/>
<path d="M139.8,130.6 A26.9,26.9 0 0 1 166.7,157.5" fill="none" stroke="#1f3aab" stroke-width="13"/>
<path d="M72,179.6 A68.3,63.25 0 0 1 207.7,179.6 L193.9,179.6 A54.5,49.5 0 0 0 85.9,179.6 Z" fill="#1f3aab" clip-path="url(#dkclip)"/>
<path d="M233.4,179.7 V133.6 Q233.4,128.1 238.9,128.1 H275.2 Q280.7,128.1 280.7,133.6 V154.5 Q280.7,160 275.2,160 H242.8 V179.7 Z M242.8,136.9 V152.1 H271.2 V136.9 Z M292.4,179.7 Q286.9,179.7 286.9,174.2 V146.3 Q286.9,140.8 292.4,140.8 H326.5 Q332,140.8 332,146.3 V159.5 Q332,165 326.5,165 H295.9 V172 H329.7 V179.7 Z M295.9,148.7 V157.1 H323.5 V148.7 Z M338.1,158 V146.3 Q338.1,140.8 343.6,140.8 H379.8 V148.4 H347.1 V155.8 H377.1 Q382.6,155.8 382.6,161.3 V174.2 Q382.6,179.7 377.1,179.7 H339.2 V172 H373.8 V163.3 H343.6 Q338.1,163.3 338.1,158 Z" fill="#1f3aab" fill-rule="evenodd"/>
<path d="M394.3,179.7 Q388.8,179.7 388.8,174.2 V146.3 Q388.8,140.8 394.3,140.8 H431.9 V148.4 H397.8 V172 H431.9 V179.7 Z M439.1,129 H447.7 V172 H453.5 V179.7 H444.6 Q439.1,179.7 439.1,174.2 Z M464.1,179.7 Q458.6,179.7 458.6,174.2 V146.3 Q458.6,140.8 464.1,140.8 H498.7 Q504.2,140.8 504.2,146.3 V159.5 Q504.2,165 498.7,165 H467.6 V172 H501.7 V179.7 Z M467.6,148.7 V157.1 H495.6 V148.7 Z" fill="#78b4e6" fill-rule="evenodd"/></svg>
<script>(function(){var s=window.innerWidth/3840;if(s>0&&Math.abs(s-1)>0.01){document.documentElement.style.zoom=s;}})();</script>
</body></html>
